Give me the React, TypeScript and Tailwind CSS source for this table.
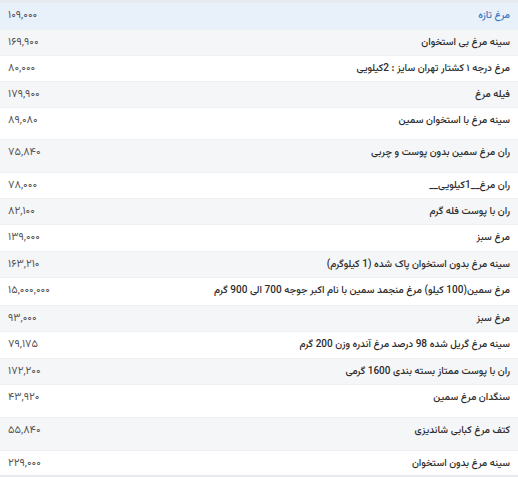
import React from 'react';

const rows = [
  { name: 'مرغ تازه', price: '۱۰۹,۰۰۰', h: 'h-[26px]' },
  { name: 'سینه مرغ بی استخوان', price: '۱۶۹,۹۰۰', h: 'h-[26px]' },
  { name: 'مرغ درجه ۱ کشتار تهران سایز : 2کیلویی', price: '۸۰,۰۰۰', h: 'h-[26px]' },
  { name: 'فیله مرغ', price: '۱۷۹,۹۰۰', h: 'h-[26px]' },
  { name: 'سینه مرغ با استخوان سمین', price: '۸۹,۰۸۰', h: 'h-[32px]' },
  { name: 'ران مرغ سمین بدون پوست و چربی', price: '۷۵,۸۴۰', h: 'h-[33px]' },
  { name: 'ران مرغ__1کیلویی__', price: '۷۸,۰۰۰', h: 'h-[26px]' },
  { name: 'ران با پوست فله گرم', price: '۸۲,۱۰۰', h: 'h-[26px]' },
  { name: 'مرغ سبز', price: '۱۳۹,۰۰۰', h: 'h-[27px]' },
  { name: 'سینه مرغ بدون استخوان پاک شده (1 کیلوگرم)', price: '۱۶۳,۲۱۰', h: 'h-[26px]' },
  { name: 'مرغ سمین(100 کیلو) مرغ منجمد سمین با نام اکبر جوجه 700 الی 900 گرم', price: '۱۵,۰۰۰,۰۰۰', h: 'h-[28px]' },
  { name: 'مرغ سبز', price: '۹۳,۰۰۰', h: 'h-[26px]' },
  { name: 'سینه مرغ گریل شده 98 درصد مرغ آندره وزن 200 گرم', price: '۷۹,۱۷۵', h: 'h-[27px]' },
  { name: 'ران با پوست ممتاز بسته بندی 1600 گرمی', price: '۱۷۲,۲۰۰', h: 'h-[26px]' },
  { name: 'سنگدان مرغ سمین', price: '۴۳,۹۲۰', h: 'h-[33px]' },
  { name: 'کتف مرغ کبابی شاندیزی', price: '۵۵,۸۴۰', h: 'h-[33px]' },
  { name: 'سینه مرغ بدون استخوان', price: '۲۲۹,۰۰۰', h: 'h-[25px]' },
];

export default function App() {
  return (
    <div
      dir="rtl"
      className="w-[518px] h-[477px] bg-white border-t-[3px] border-b-2 border-[#e6e9ee] font-['Vazirmatn',sans-serif]"
    >
      {rows.map((r, i) => (
        <div
          key={i}
          className={`${r.h} flex items-start justify-between px-2 pt-[5px] border-t border-[#eef0f3] first:border-t-0 ${
            i === 0 ? 'bg-[#e8f0fa]' : i % 2 === 1 ? 'bg-[#f5f6f8]' : 'bg-white'
          }`}
        >
          <span className={`text-[10px] leading-[16px] font-medium ${i === 0 ? 'text-[#3a78c0]' : 'text-[#2b2b2b]'}`}>
            {r.name}
          </span>
          <span className="text-[11px] leading-[16px] text-[#555]">{r.price}</span>
        </div>
      ))}
    </div>
  );
}
